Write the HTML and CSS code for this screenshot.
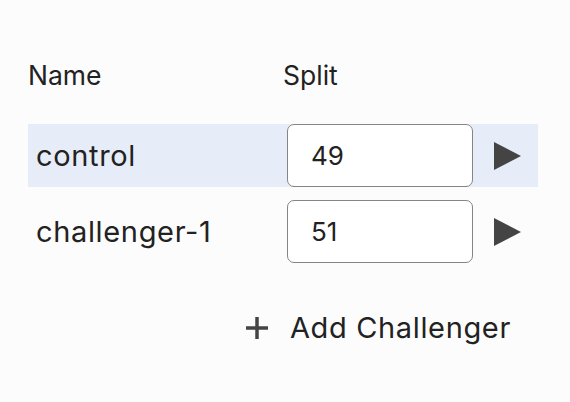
FILE: index.html
```html
<!DOCTYPE html>
<html>
<head>
<meta charset="utf-8">
<link rel="stylesheet" href="styles.css">
</head>
<body>
<div class="panel">
  <div class="grid head">
    <div class="h-name">Name</div>
    <div class="h-split">Split</div>
    <div></div>
  </div>
  <div class="grid row active">
    <div class="name">control</div>
    <div class="split"><input class="field" value="49"></div>
    <div class="play"><svg width="27" height="28" viewBox="0 0 27 28"><path d="M0 0 L27 14 L0 28 Z" fill="#444"/></svg></div>
  </div>
  <div class="grid row">
    <div class="name">challenger-1</div>
    <div class="split"><input class="field" value="51"></div>
    <div class="play"><svg width="27" height="28" viewBox="0 0 27 28"><path d="M0 0 L27 14 L0 28 Z" fill="#444"/></svg></div>
  </div>
  <div class="add">
    <svg class="plus" width="24" height="24" viewBox="0 0 24 24"><path d="M12 1 V23 M1 12 H23" stroke="#444" stroke-width="3.5"/></svg>
    <span>Add Challenger</span>
  </div>
</div>
</body>
</html>
```
FILE: styles.css
```css
html, body {
  margin: 0;
  padding: 0;
  background: #fcfcfc;
}
body {
  font-family: Inter, "Liberation Sans", sans-serif;
  color: #222;
}
.panel {
  width: 510px;
  margin-left: 28px;
  padding-top: 56px;
  display: flex;
  flex-direction: column;
}
.grid {
  display: grid;
  grid-template-columns: 259px 186px 1fr;
  align-items: center;
}
.head {
  font-size: 26.5px;
  height: 38px;
  margin-bottom: 30px;
}
.h-name { padding-left: 0; }
.h-split { margin-left: -4px; }
.row {
  height: 63px;
  font-size: 29px;
  letter-spacing: 0.65px;
  margin-bottom: 13px;
}
.row.active { background: #e7edf8; }
.name { padding-left: 8px; }
.split { height: 63px; }
.field {
  box-sizing: border-box;
  width: 186px;
  height: 63px;
  border: 1.5px solid #858585;
  border-radius: 7px;
  background: #fff;
  font-family: inherit;
  font-size: 26px;
  letter-spacing: 0;
  color: #222;
  padding: 0 0 0 23px;
  margin: 0;
  outline: none;
}
.play {
  display: flex;
  padding-left: 21px;
}
.play svg { display: block; }
.add {
  display: flex;
  align-items: center;
  justify-content: flex-end;
  padding-right: 27px;
  margin-top: 34px;
  font-size: 29px;
  letter-spacing: 0.65px;
  gap: 21px;
  color: #222;
}
.plus { display: block; }
```
